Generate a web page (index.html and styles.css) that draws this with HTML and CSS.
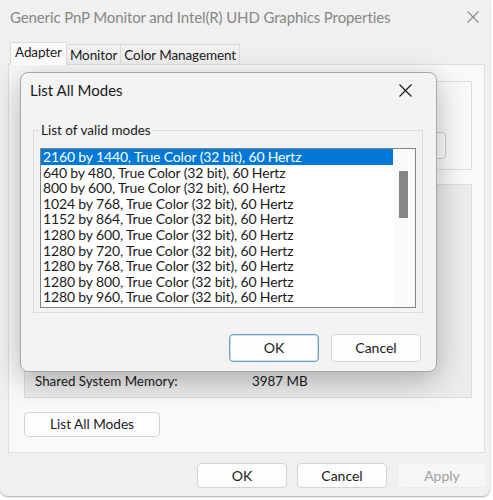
FILE: index.html
```html
<!DOCTYPE html>
<html>
<head>
<meta charset="utf-8">
<link rel="stylesheet" href="styles.css">
</head>
<body>
<div class="window">
  <div class="titlebar">
    <span class="title">Generic PnP Monitor and Intel(R) UHD Graphics Properties</span>
    <svg class="close" width="12" height="12" viewBox="0 0 12 12"><path d="M0.5 0.5L11.5 11.5M11.5 0.5L0.5 11.5" stroke="#8a8a8a" stroke-width="1.1"/></svg>
  </div>
  <div class="tabs">
    <div class="tab active">Adapter</div>
    <div class="tab">Monitor</div>
    <div class="tab">Color Management</div>
  </div>
  <div class="panel">
    <div class="group g1">
      <div class="ghost-btn"></div>
    </div>
    <div class="group g2">
      <div class="memrow"><span class="lbl">Shared System Memory:</span><span class="val">3987 MB</span></div>
    </div>
    <div class="btn listbtn">List All Modes</div>
  </div>
  <div class="footer">
    <div class="btn">OK</div>
    <div class="btn">Cancel</div>
    <div class="btn disabled">Apply</div>
  </div>

  <div class="dialog">
    <div class="dtitle">
      <span>List All Modes</span>
      <svg class="dclose" width="13" height="13" viewBox="0 0 13 13"><path d="M0.5 0.5L12.5 12.5M12.5 0.5L0.5 12.5" stroke="#1a1a1a" stroke-width="1.2"/></svg>
    </div>
    <fieldset class="modes">
      <legend>List of valid modes</legend>
      <div class="listbox">
        <div class="items">
          <div class="item sel">2160 by 1440, True Color (32 bit), 60 Hertz</div>
          <div class="item">640 by 480, True Color (32 bit), 60 Hertz</div>
          <div class="item">800 by 600, True Color (32 bit), 60 Hertz</div>
          <div class="item">1024 by 768, True Color (32 bit), 60 Hertz</div>
          <div class="item">1152 by 864, True Color (32 bit), 60 Hertz</div>
          <div class="item">1280 by 600, True Color (32 bit), 60 Hertz</div>
          <div class="item">1280 by 720, True Color (32 bit), 60 Hertz</div>
          <div class="item">1280 by 768, True Color (32 bit), 60 Hertz</div>
          <div class="item">1280 by 800, True Color (32 bit), 60 Hertz</div>
          <div class="item">1280 by 960, True Color (32 bit), 60 Hertz</div>
        </div>
        <div class="scrollbar"><div class="thumb"></div></div>
      </div>
    </fieldset>
    <div class="dbuttons">
      <div class="btn dbtn default">OK</div>
      <div class="btn dbtn">Cancel</div>
    </div>
  </div>
</div>
</body>
</html>
```

FILE: styles.css
```css
html, body {
  margin: 0;
  padding: 0;
  background: #ffffff;
}
body {
  font-family: Lato, "Noto Sans", sans-serif;
  color: #1a1a1a;
  width: 493px;
  height: 500px;
  overflow: hidden;
}
.window {
  position: relative;
  width: 490px;
  height: 496px;
  background: #f0f0f0;
  border-radius: 0 0 8px 8px;
  box-shadow: 0 1px 2px rgba(0,0,0,0.35);
  display: flex;
  flex-direction: column;
  box-sizing: border-box;
}
.titlebar {
  height: 34px;
  display: flex;
  align-items: center;
  justify-content: space-between;
  padding: 0 11px 0 10px;
}
.title {
  font-size: 15px;
  color: #878787;
  letter-spacing: -0.12px;
}
.tabs {
  display: flex;
  margin: 10px 0 0 10px;
  height: 21px;
  align-items: flex-end;
}
.tab {
  font-size: 13.5px;
  height: 20px;
  line-height: 20px;
  padding: 0 3px;
  border: 1px solid #dadada;
  border-bottom: none;
  background: #f0f0f0;
  margin-left: -1px;
  letter-spacing: -0.1px;
}
.tab.active {
  background: #fbfbfb;
  height: 22px;
  line-height: 19px;
  margin-left: 0;
  position: relative;
  z-index: 1;
  padding: 0 4px;
}
.panel {
  margin: -1px 5px 0 8px;
  height: 389px;
  background: #f9f9f9;
  border: 1px solid #dedede;
  box-sizing: border-box;
  padding: 16px 12px 0 15px;
  display: flex;
  flex-direction: column;
}
.group {
  border: 1px solid #dcdcdc;
  box-sizing: border-box;
}
.g1 {
  height: 89px;
  position: relative;
}
.ghost-btn {
  position: absolute;
  right: 25px;
  top: 50px;
  width: 90px;
  height: 25px;
  border: 1px solid #d0d0d0;
  border-radius: 4px;
  background: #fdfdfd;
}
.g2 {
  margin-top: 14px;
  height: 214px;
  display: flex;
  flex-direction: column;
  justify-content: flex-end;
  padding: 0 0 8px 10px;
  background: #ececec;
}
.memrow {
  font-size: 13.4px;
  display: flex;
}
.lbl { width: 217px; }
.btn {
  font-size: 14px;
  height: 25px;
  line-height: 23px;
  box-sizing: border-box;
  border: 1px solid #d3d3d3;
  border-radius: 4px;
  background: #fdfdfd;
  text-align: center;
  width: 90px;
}
.listbtn {
  margin-top: 14px;
  width: 136px;
  font-size: 13.6px;
}
.footer {
  display: flex;
  justify-content: flex-end;
  gap: 10px;
  padding: 10px 3px 0 0;
}
.btn.disabled {
  color: #a0a0a0;
  background: #f6f6f6;
  border-color: #ececec;
}
.dialog {
  position: absolute;
  left: 20px;
  top: 72px;
  width: 417px;
  height: 300px;
  box-sizing: border-box;
  background: #f3f3f3;
  border: 1px solid #a7a7a7;
  border-radius: 8px;
  box-shadow: 0 8px 30px rgba(0,0,0,0.28);
  display: flex;
  flex-direction: column;
  padding: 0 15px 0 12px;
}
.dtitle {
  height: 34px;
  display: flex;
  align-items: center;
  justify-content: space-between;
  font-size: 15px;
  padding-right: 9px;
  margin-left: -3px;
}
.modes {
  margin: 15px -2px 0 0;
  border: 1px solid #dcdcdc;
  padding: 0 6px 4px 6px;
  height: 191px;
  box-sizing: border-box;
  min-width: 0;
}
.modes legend {
  font-size: 13.5px;
  padding: 0 1px;
  line-height: 16px;
}
.listbox {
  margin-top: 10px;
  height: 160px;
  box-sizing: border-box;
  border: 1px solid #838383;
  background: #ffffff;
  display: flex;
}
.items {
  flex: 1;
}
.item {
  font-size: 14px;
  letter-spacing: -0.15px;
  height: 15.6px;
  line-height: 15.6px;
  padding-left: 2px;
  white-space: nowrap;
  margin-right: 1px;
}
.item.sel {
  background: #0078d7;
  color: #ffffff;
}
.scrollbar {
  width: 21px;
  background: #fafafa;
  position: relative;
}
.thumb {
  position: absolute;
  left: 5px;
  top: 22px;
  width: 9px;
  height: 47px;
  background: #868686;
}
.dbuttons {
  display: flex;
  justify-content: flex-end;
  gap: 12px;
  margin-top: 21px;
}
.dbtn {
  height: 28px;
  line-height: 26px;
}
.dbtn.default {
  border-color: #6aa0c8;
  box-shadow: inset 0 0 0 0.5px #9cc3e0;
}
```
